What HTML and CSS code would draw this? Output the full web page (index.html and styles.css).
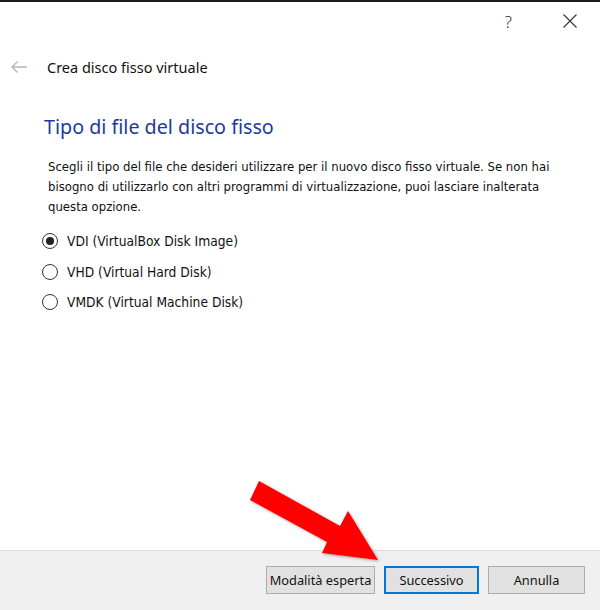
FILE: index.html
```html
<!DOCTYPE html>
<html lang="it">
<head>
<meta charset="utf-8">
<title>Crea disco fisso virtuale</title>
<link rel="stylesheet" href="styles.css">
</head>
<body>
<div class="window">
  <div class="titlebar">
    <span class="help">?</span>
    <svg class="close" width="14" height="14" viewBox="0 0 14 14"><path d="M0.5 0.5L13.5 13.5M13.5 0.5L0.5 13.5" stroke="#333" stroke-width="1.1" fill="none"/></svg>
  </div>
  <div class="header">
    <svg class="back" width="17" height="12" viewBox="0 0 17 12"><path d="M1 6H16M6.5 0.5L1 6L6.5 11.5" stroke="#b4b4b4" stroke-width="1.3" fill="none"/></svg>
    <span class="wiztitle">Crea disco fisso virtuale</span>
  </div>
  <div class="content">
    <h1 class="heading">Tipo di file del disco fisso</h1>
    <p class="desc">Scegli il tipo del file che desideri utilizzare per il nuovo disco fisso virtuale. Se non hai bisogno di utilizzarlo con altri programmi di virtualizzazione, puoi lasciare inalterata questa opzione.</p>
    <div class="options">
      <div class="option"><span class="radio checked"></span><span class="label">VDI (VirtualBox Disk Image)</span></div>
      <div class="option"><span class="radio"></span><span class="label">VHD (Virtual Hard Disk)</span></div>
      <div class="option"><span class="radio"></span><span class="label">VMDK (Virtual Machine Disk)</span></div>
    </div>
  </div>
  <div class="footer">
    <button class="btn expert">Modalità esperta</button>
    <button class="btn default">Successivo</button>
    <button class="btn">Annulla</button>
  </div>
  <svg class="pointer" width="600" height="610" viewBox="0 0 600 610">
    <defs>
      <filter id="sh" x="-20%" y="-20%" width="140%" height="140%">
        <feDropShadow dx="1" dy="1" stdDeviation="1.5" flood-color="#000" flood-opacity="0.35"/>
      </filter>
    </defs>
    <polygon points="259,481 340,526 348,511 378,560 322,553 327,542 250,500" fill="#ff0000" filter="url(#sh)"/>
  </svg>
</div>
</body>
</html>
```
FILE: styles.css
```css
html, body {
  margin: 0;
  padding: 0;
  background: #ffffff;
}
.window {
  position: relative;
  width: 600px;
  height: 610px;
  display: flex;
  flex-direction: column;
  box-sizing: border-box;
  border-top: 2px solid #1c1c1c;
  font-family: "Noto Sans", "Open Sans", sans-serif;
  color: #000;
  overflow: hidden;
}
.titlebar {
  height: 38px;
  display: flex;
  align-items: center;
  justify-content: flex-end;
  padding-right: 23px;
  gap: 51px;
}
.help {
  font-family: "Noto Sans", sans-serif;
  font-weight: 300;
  font-size: 17px;
  color: #333;
  line-height: 1;
}
.close {
  display: block;
}
.header {
  height: 54px;
  display: flex;
  align-items: center;
  padding-left: 11px;
}
.back {
  display: block;
  margin-right: 19px;
}
.wiztitle {
  font-size: 14.5px;
  color: #111;
}
.content {
  padding-left: 44px;
  padding-right: 30px;
}
.heading {
  margin: 20px 0 0;
  font-weight: normal;
  font-size: 19.7px;
  color: #1b3b9c;
  line-height: 26px;
}
.desc {
  margin: 17px 0 0 4px;
  font-family: "DejaVu Sans Condensed", "DejaVu Sans", sans-serif;
  font-size: 13px;
  line-height: 20px;
  color: #111;
}
.options {
  margin-top: 9px;
  display: flex;
  flex-direction: column;
}
.option {
  height: 30.5px;
  display: flex;
  align-items: center;
  margin-left: -2px;
}
.radio {
  width: 16px;
  height: 16px;
  border: 1px solid #333;
  border-radius: 50%;
  box-sizing: border-box;
  display: flex;
  align-items: center;
  justify-content: center;
  margin-right: 9px;
  background: #fff;
}
.radio.checked::after {
  content: "";
  width: 8px;
  height: 8px;
  border-radius: 50%;
  background: #222;
}
.label {
  font-family: "DejaVu Sans Condensed", "DejaVu Sans", sans-serif;
  font-size: 13.7px;
  color: #111;
}
.footer {
  margin-top: auto;
  height: 60px;
  background: #f0f0f0;
  border-top: 1px solid #dcdcdc;
  display: flex;
  align-items: flex-start;
  justify-content: flex-end;
  padding: 15px 15px 0 0;
  gap: 9px;
  box-sizing: border-box;
}
.btn {
  height: 28px;
  width: 97px;
  padding: 0;
  background: #e1e1e1;
  border: 1px solid #adadad;
  font-family: "Noto Sans", sans-serif;
  font-size: 12.8px;
  color: #111;
  box-sizing: border-box;
}
.btn.expert {
  width: 109px;
}
.btn.default {
  width: 95px;
  border: 2px solid #0078d7;
}
.pointer {
  position: absolute;
  left: 0;
  top: -2px;
  pointer-events: none;
}
```
